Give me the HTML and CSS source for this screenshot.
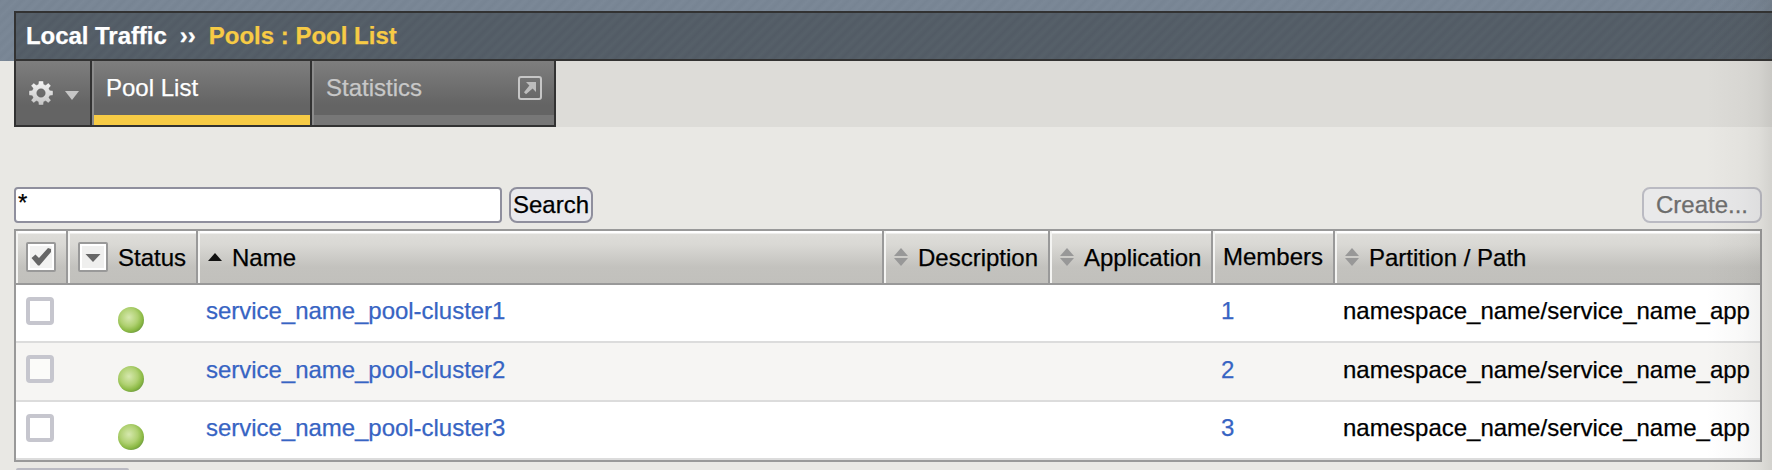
FILE: index.html
```
<!DOCTYPE html>
<html lang="en">
<head>
<meta charset="utf-8">
<title>Local Traffic - Pool List</title>
<link rel="stylesheet" href="styles.css">
</head>
<body>
<svg class="defs" width="0" height="0">
  <defs>
    <radialGradient id="green" cx="0.42" cy="0.4" r="0.62">
      <stop offset="0" stop-color="#d6e8ae"/>
      <stop offset="0.55" stop-color="#b0d172"/>
      <stop offset="0.85" stop-color="#8bb944"/>
      <stop offset="1" stop-color="#729f40"/>
    </radialGradient>
    <linearGradient id="metal" x1="0" y1="0" x2="0" y2="1">
      <stop offset="0" stop-color="#f4f4f4"/>
      <stop offset="1" stop-color="#c4c4c4"/>
    </linearGradient>
    <symbol id="dot" viewBox="0 0 26 26"><circle cx="13" cy="13" r="13" fill="url(#green)"/></symbol>
    <symbol id="sort" viewBox="0 0 14 18"><path d="M7 0L14 8H0ZM0 10H14L7 18Z" fill="#989898"/></symbol>
  </defs>
</svg>
<header class="banner">
  <div class="crumbs"><span class="section">Local Traffic</span><span class="sep">››</span><span class="page">Pools : Pool List</span></div>
</header>
<nav class="menubar">
  <div class="tabs">
    <div class="tab gear">
      <svg width="28" height="28" viewBox="-14 -14 28 28"><g fill="url(#metal)" stroke="#555" stroke-opacity=".35" stroke-width="1"><path fill-rule="evenodd" d="M-2.3-12H2.3L2.8-8.7L4.7-7.9L7.3-10L10-7.3L7.9-4.7L8.7-2.8L12-2.3V2.3L8.7 2.8L7.9 4.7L10 7.3L7.3 10L4.7 7.9L2.8 8.7L2.3 12H-2.3L-2.8 8.7L-4.7 7.9L-7.3 10L-10 7.3L-7.9 4.7L-8.7 2.8L-12 2.3V-2.3L-8.7-2.8L-7.9-4.7L-10-7.3L-7.3-10L-4.7-7.9L-2.8-8.7ZM0-4.3A4.3 4.3 0 1 0 0 4.3A4.3 4.3 0 1 0 0-4.3Z"/></g></svg>
      <svg class="caret" width="14" height="9" viewBox="0 0 14 9"><path d="M0 0H14L7 9Z" fill="#c6c6c6"/></svg>
    </div>
    <div class="tab pool active">Pool List</div>
    <div class="tab stats">Statistics
      <svg width="24" height="24" viewBox="0 0 24 24"><rect x="1" y="1" width="22" height="22" rx="2" fill="none" stroke="#c6c6c6" stroke-width="2"/><path d="M8 6H18V16L14.6 12.6L8 18.2L6 16.2L11.4 9.4Z" fill="#bdbdbd"/></svg>
    </div>
  </div>
</nav>
<main class="content">
  <div class="toolbar">
    <div class="search-box">*</div>
    <div class="button">Search</div>
    <div class="button create">Create...</div>
  </div>
  <div class="table">
    <div class="row head">
      <div class="cell"><svg class="box" width="30" height="30" viewBox="0 0 30 30"><rect x="1" y="1" width="28" height="28" rx="1" fill="#f2f2f1" stroke="#999" stroke-width="2"/><rect x="3" y="3" width="24" height="24" fill="none" stroke="#fff" stroke-width="2"/><path d="M5.5 16L9.5 12.5L13 16L22 6L25 7V10L13.5 23.5H12Z" fill="#666"/></svg></div>
      <div class="cell"><svg class="box" width="30" height="30" viewBox="0 0 30 30"><rect x="1" y="1" width="28" height="28" rx="1" fill="#efefee" stroke="#999" stroke-width="2"/><rect x="3" y="3" width="24" height="24" fill="none" stroke="#fff" stroke-width="2"/><path d="M7.5 12H22.5L15 20Z" fill="#666"/></svg><span class="status">Status</span></div>
      <div class="cell"><svg class="up" width="14" height="8" viewBox="0 0 14 8"><path d="M7 0L14 8H0Z" fill="#111"/></svg><span>Name</span></div>
      <div class="cell"><svg class="sort" width="14" height="18"><use href="#sort"/></svg><span>Description</span></div>
      <div class="cell"><svg class="sort" width="14" height="18"><use href="#sort"/></svg><span>Application</span></div>
      <div class="cell members"><span>Members</span></div>
      <div class="cell"><svg class="sort" width="14" height="18"><use href="#sort"/></svg><span>Partition / Path</span></div>
    </div>
    <div class="row">
      <div class="check"></div><svg class="dot" width="26" height="26"><use href="#dot"/></svg>
      <a class="name">service_name_pool-cluster1</a><span></span><span></span><a class="count">1</a><span class="path">namespace_name/service_name_app</span>
    </div>
    <div class="row alt">
      <div class="check"></div><svg class="dot" width="26" height="26"><use href="#dot"/></svg>
      <a class="name">service_name_pool-cluster2</a><span></span><span></span><a class="count">2</a><span class="path">namespace_name/service_name_app</span>
    </div>
    <div class="row">
      <div class="check"></div><svg class="dot" width="26" height="26"><use href="#dot"/></svg>
      <a class="name">service_name_pool-cluster3</a><span></span><span></span><a class="count">3</a><span class="path">namespace_name/service_name_app</span>
    </div>
  </div>
  <div class="next"></div>
</main>
<div class="edge-shade"></div>
</body>
</html>
```
FILE: styles.css
```
* { box-sizing: border-box; }
body {
  margin: 0;
  height: 470px;
  overflow: hidden;
  position: relative;
  background: #e9e8e4;
  font: 24px/28px "Liberation Sans", Arial, sans-serif;
  color: #000;
  -webkit-text-stroke: 0.25px currentColor;
}
svg { display: block; flex: none; }
.defs { position: absolute; }
.banner {
  height: 61px;
  padding: 11px 0 0 14px;
  background: repeating-linear-gradient(135deg, #778493, #7b8897 4px, #778493 8px);
}
.crumbs {
  height: 50px;
  padding: 9px 0 0 10px;
  display: flex;
  border: 2px solid #323232;
  border-right: 0;
  background: repeating-linear-gradient(135deg, #525b65, #566069 4px, #525b65 8px);
  font-weight: bold;
  color: #fff;
  white-space: pre;
}
.section { letter-spacing: -0.05px; }
.sep { margin-left: 13px; }
.page { margin-left: 13px; color: #f7cb45; }
.menubar {
  height: 66px;
  margin-left: 14px;
  background: #dddcd8;
}
.tabs {
  display: flex;
  width: 542px;
  height: 66px;
  border: solid #323232;
  border-width: 0 2px 2px;
}
.tab {
  position: relative;
  height: 64px;
  color: #fff;
  background: linear-gradient(#7e7e7e, #646464 44px);
}
.tab + .tab {
  border-left: 2px solid #8c8c8c;
  padding: 13px 0 0 12px;
}
.gear { width: 76px; border-right: 2px solid #323232; display: flex; padding: 18px 0 0 11px; }
.caret { margin: 12px 0 0 10px; }
.pool { width: 220px; border-right: 2px solid #323232; }
.tab.stats { flex: 1; display: flex; justify-content: space-between; padding-right: 12px; color: #c8c8c8; }
.stats svg { margin-top: 2px; }
.active::after, .stats::after {
  content: "";
  position: absolute;
  left: 0;
  right: 0;
  bottom: 0;
  height: 10px;
  background: #f7cb45;
}
.stats::after { background: #777; }
.content { padding: 60px 10px 0 14px; }
.toolbar { display: flex; height: 36px; }
.search-box {
  width: 488px;
  border: 2px solid #8f8f9d;
  border-radius: 4px;
  background: #fff;
  padding: 0 2px;
}
.button {
  height: 36px;
  width: 84px;
  margin-left: 7px;
  border: 2px solid #8f8f9d;
  border-radius: 8px;
  background: #e9e9ed;
  line-height: 31px;
  text-align: center;
}
.create { width: 120px; margin-left: auto; border-color: #babac2; color: #6d6d6d; background: #e9e9ea; }
.table {
  margin-top: 6px;
  height: 233px;
  border: 2px solid #999;
}
.row {
  display: grid;
  grid-template-columns: 52px 130px 686px 166px 163px 122px 1fr;
  height: 58px;
  background: #fff;
  border-bottom: 2px solid #dcdcdc;
}
.row.alt { height: 59px; background: #f6f5f3; }
.head {
  height: 54px;
  border-bottom-color: #999;
  background: linear-gradient(#fff 0 2px, #deddd9 3px, #d9d8d4 14px, #c3c2be 36px, #c1c0bc);
}
.cell {
  display: flex;
  padding: 13px 0 0 8px;
  border-left: 2px solid #f4f4f2;
  border-right: 2px solid #999;
  white-space: nowrap;
}
.cell:last-child { border-right: 0; }
.box { margin: -2px 0 0; }
.status { margin-left: 10px; }
.up { margin: 9px 10px 0 0; }
.sort { margin: 4px 10px 0 0; }
.members { padding-top: 12px; }
.check {
  width: 28px;
  height: 28px;
  margin: 12px 0 0 10px;
  border: 4px solid #c6c6ce;
  border-radius: 4px;
  background: #fff;
}
.alt .check { background: #fbfbf9; }
.dot { margin: 22px 0 0 50px; }
.alt .dot { margin-top: 23px; }
.name, .count { padding: 12px 0 0 8px; color: #3764c3; }
.name { letter-spacing: -0.03px; }
.path { padding: 12px 0 0 8px; }
.alt .name, .alt .count, .alt .path { padding-top: 13px; }
.next {
  width: 113px;
  height: 2px;
  margin: 6px 0 0 2px;
  border-radius: 4px 4px 0 0;
  background: #babac2;
}
.edge-shade {
  position: absolute;
  top: 0;
  right: 0;
  width: 66px;
  height: 470px;
  background: linear-gradient(90deg, transparent, rgba(50, 50, 45, .03) 55%, rgba(50, 50, 45, .06) 80%, rgba(50, 50, 45, .12));
}
```
